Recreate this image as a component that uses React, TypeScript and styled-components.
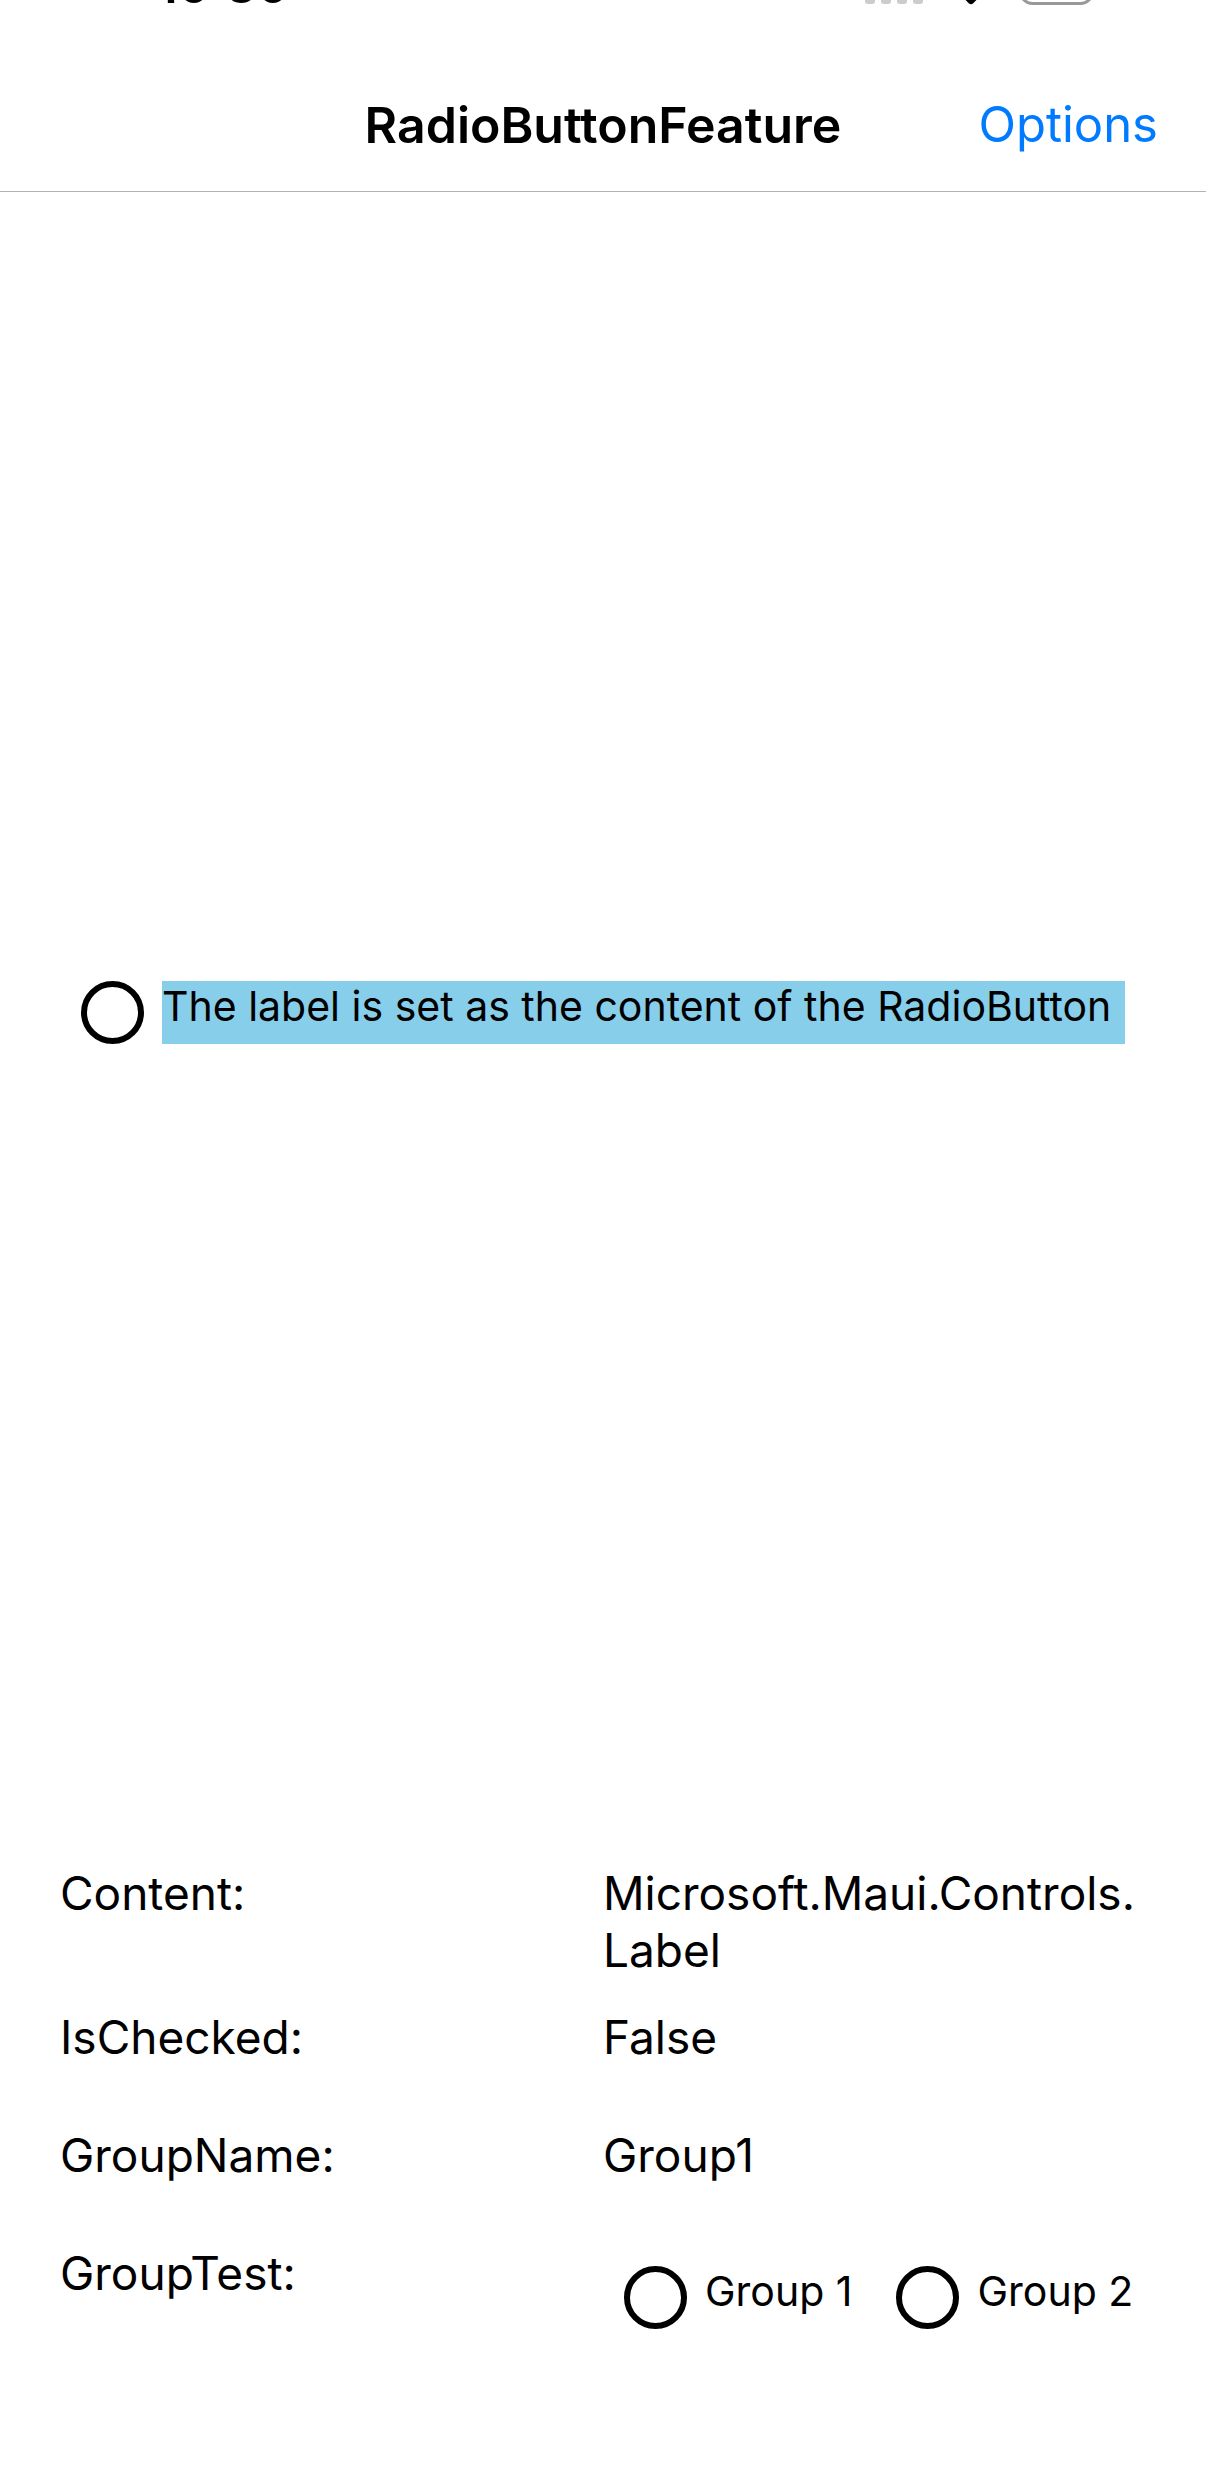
import React, { useState } from "react";
import styled, { createGlobalStyle } from "styled-components";

const GlobalStyle = createGlobalStyle`
  *, *::before, *::after { box-sizing: border-box; }
  body {
    margin: 0;
    background: #fff;
    color: #000;
    font-family: Inter, "Liberation Sans", sans-serif;
  }
`;

const Page = styled.div`
  display: flex;
  flex-direction: column;
  min-height: 100vh;
`;

const StatusBar = styled.div`
  display: flex;
  flex: none;
  justify-content: space-between;
  align-items: flex-end;
  height: 60px;
  padding: 0 112px 44px 157px;
  overflow: hidden;
`;

const Clock = styled.time`
  font-size: 49px;
  font-weight: 600;
  line-height: 60px;
`;

const StatusIcons = styled.svg`
  display: block;
  flex: none;
  width: 232px;
  height: 60px;
`;

const NavBar = styled.header`
  display: grid;
  flex: none;
  grid-template-columns: 1fr auto 1fr;
  align-items: center;
  height: 132px;
  padding: 0 48px 2px;
  border-bottom: 1px solid #b2b2b2;
`;

const Title = styled.h1`
  grid-column: 2;
  margin: 0;
  font-size: 50px;
  font-weight: 600;
  line-height: 60px;
`;

const NavButton = styled.button`
  justify-self: end;
  padding: 0;
  border: 0;
  background: none;
  color: #007aff;
  font-family: inherit;
  font-size: 49px;
  line-height: 60px;
  cursor: pointer;
`;

const Stage = styled.main`
  display: flex;
  flex: 1;
  align-items: center;
  padding: 0 81px;
`;

const RadioLabel = styled.label<{ $wide?: boolean }>`
  display: flex;
  flex: ${(p) => (p.$wide ? "1" : "none")};
  gap: 18px;
  cursor: pointer;
`;

const Radio = styled.input`
  appearance: none;
  display: grid;
  place-items: center;
  flex: none;
  width: 63px;
  height: 63px;
  margin: 0;
  border: 6px solid #000;
  border-radius: 50%;
  background: #fff;
  cursor: pointer;

  &:checked::before {
    content: "";
    width: 33px;
    height: 33px;
    border-radius: 50%;
    background: #000;
  }
`;

const RadioText = styled.span<{ $highlight?: boolean }>`
  flex: 1;
  min-height: 63px;
  background: ${(p) => (p.$highlight ? "#87ceeb" : "transparent")};
  font-size: 41px;
  line-height: 50px;
  white-space: nowrap;
`;

const Details = styled.dl`
  display: flex;
  flex-direction: column;
  gap: 30px;
  margin: 0;
  padding: 32px 60px 126px;
`;

const DetailRow = styled.div`
  display: grid;
  grid-template-columns: 1fr 1fr;
  min-height: 88px;
  font-size: 46px;
  line-height: 57px;
`;

const Value = styled.dd`
  margin: 0;
`;

const RadioGroup = styled.div`
  display: flex;
  gap: 44px;
  padding: 21px 0 17px 21px;
`;

export default function App() {
  const [checked, setChecked] = useState(false);
  const [group, setGroup] = useState<string | null>(null);

  return (
    <Page>
      <GlobalStyle />
      <StatusBar>
        <Clock>10:30</Clock>
        <StatusIcons viewBox="0 0 232 60" aria-hidden="true">
          {[3, 19, 35, 51].map((x) => (
            <rect key={x} x={x} y="36" width="10" height="12" rx="3" fill="#ccc" />
          ))}
          <path d="M107 47.5 Q109 49 111 47.5 L135 23 A37 37 0 0 0 83 23 Z" />
          <rect x="158.5" y="11" width="72" height="36.5" rx="12" fill="none" stroke="#999" strokeWidth="3" />
        </StatusIcons>
      </StatusBar>

      <NavBar>
        <Title>RadioButtonFeature</Title>
        <NavButton type="button">Options</NavButton>
      </NavBar>

      <Stage>
        <RadioLabel $wide>
          <Radio type="radio" name="Group1" checked={checked} onChange={() => setChecked(true)} />
          <RadioText $highlight>The label is set as the content of the RadioButton</RadioText>
        </RadioLabel>
      </Stage>

      <Details>
        <DetailRow>
          <dt>Content:</dt>
          <Value>
            Microsoft.Maui.Controls.
            <wbr />
            Label
          </Value>
        </DetailRow>
        <DetailRow>
          <dt>IsChecked:</dt>
          <Value>{checked ? "True" : "False"}</Value>
        </DetailRow>
        <DetailRow>
          <dt>GroupName:</dt>
          <Value>Group1</Value>
        </DetailRow>
        <DetailRow>
          <dt id="group-test">GroupTest:</dt>
          <Value>
            <RadioGroup role="radiogroup" aria-labelledby="group-test">
              {["Group 1", "Group 2"].map((name) => (
                <RadioLabel key={name}>
                  <Radio
                    type="radio"
                    name="GroupTest"
                    checked={group === name}
                    onChange={() => setGroup(name)}
                  />
                  <RadioText>{name}</RadioText>
                </RadioLabel>
              ))}
            </RadioGroup>
          </Value>
        </DetailRow>
      </Details>
    </Page>
  );
}
